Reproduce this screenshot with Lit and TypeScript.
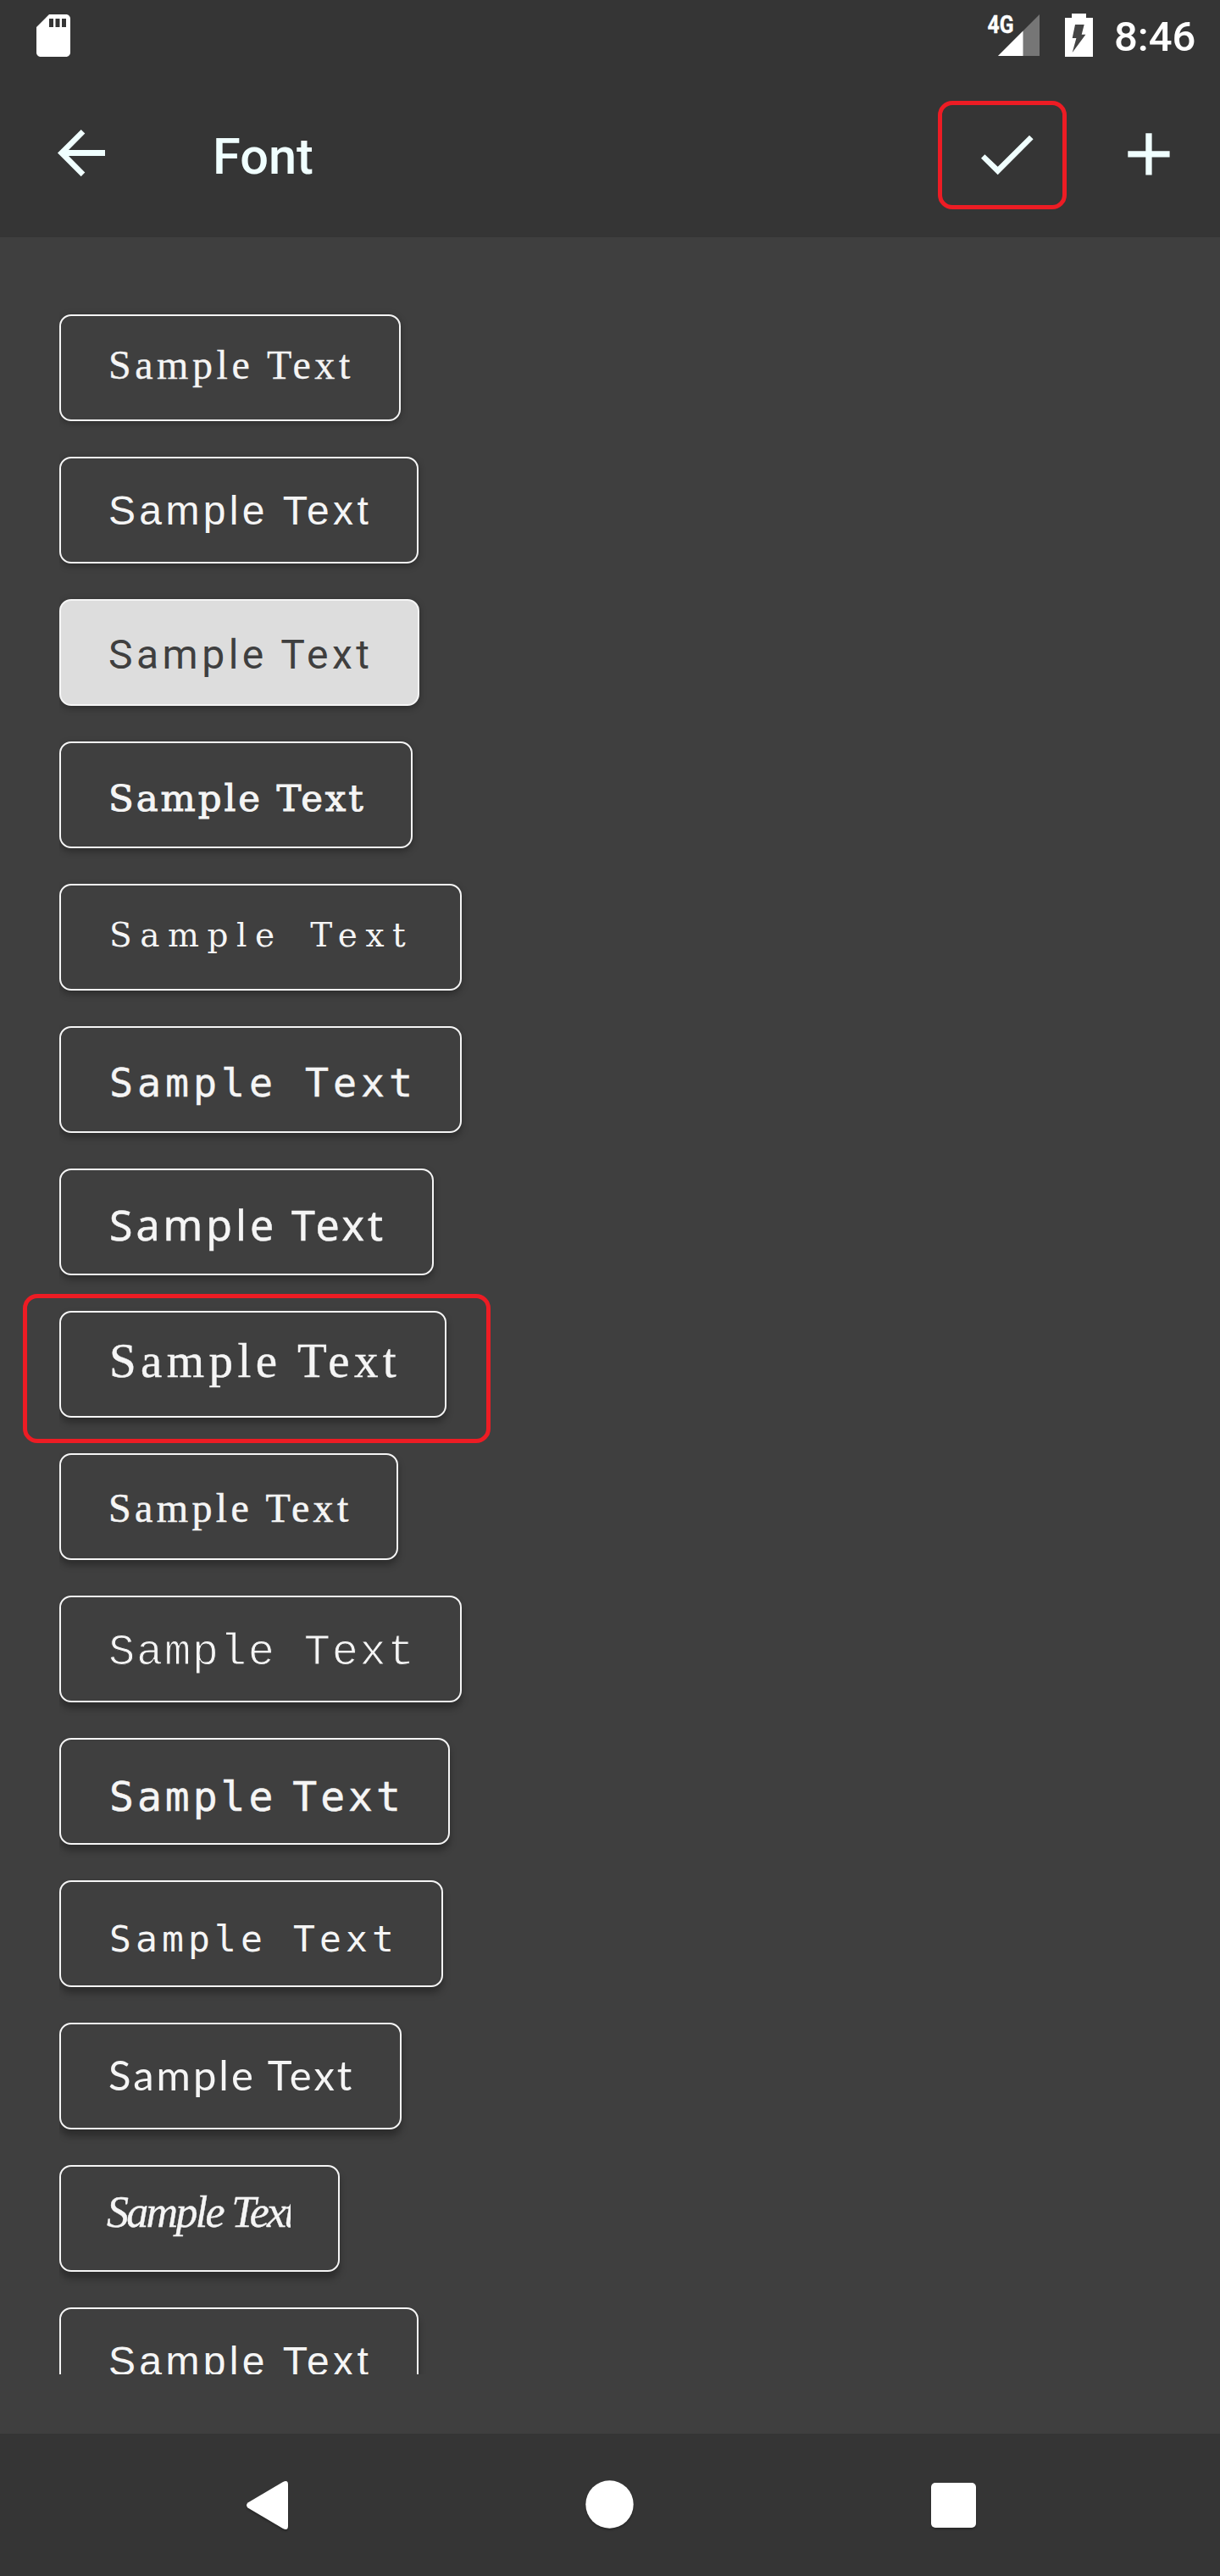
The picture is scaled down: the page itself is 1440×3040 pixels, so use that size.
import { LitElement, html, css } from "lit";
import { customElement, property } from "lit/decorators.js";
import { styleMap } from "lit/directives/style-map.js";

interface Sample {
  face: string;
  width: number;
  baseline: number;
  selected?: boolean;
}

const SAMPLES: Sample[] = [
  { face: "book", width: 403, baseline: 76 },
  { face: "arial", width: 424, baseline: 80 },
  { face: "roboto", width: 425, baseline: 82, selected: true },
  { face: "slab", width: 417, baseline: 82 },
  { face: "typewriter", width: 475, baseline: 74 },
  { face: "mono", width: 475, baseline: 83 },
  { face: "humanist", width: 442, baseline: 85 },
  { face: "display", width: 457, baseline: 78 },
  { face: "times", width: 400, baseline: 81 },
  { face: "light-mono", width: 475, baseline: 81 },
  { face: "duo", width: 461, baseline: 86 },
  { face: "code", width: 453, baseline: 84 },
  { face: "lato", width: 404, baseline: 80 },
  { face: "script", width: 331, baseline: 73 },
  { face: "helvetica", width: 424, baseline: 80 },
];

@customElement("font-button")
export class FontButton extends LitElement {
  @property({ attribute: false }) sample!: Sample;
  @property({ type: Number }) depth = 0;

  static styles = css`
    :host { display: block; }
    .btn {
      display: flex;
      align-items: baseline;
      box-sizing: border-box;
      height: 126px;
      margin: 0;
      padding: 0 56px;
      border: 2px solid #f5f5f5;
      border-radius: 14px;
      background: #3f3f3f;
      color: #f5f5f5;
      white-space: pre;
    }
    /* Empty strut whose bottom edge fixes the label's baseline for any font. */
    .btn::before { content: ""; width: 0; height: var(--baseline); }
    .selected { background: #ddd; color: #3f3f3f; }
    .label { line-height: 1; flex: none; }
    .book { font: 48px/1 "Liberation Serif", serif; letter-spacing: 4.55px; -webkit-text-stroke: 0.3px #f5f5f5; }
    .arial { font: 48px/1 "Liberation Sans", sans-serif; letter-spacing: 4.35px; }
    .roboto { font: 48px/1 Roboto, sans-serif; letter-spacing: 4.5px; }
    .slab { font: 43.5px/1 "DejaVu Serif", serif; letter-spacing: 2.9px; -webkit-text-stroke: 1px #f5f5f5; }
    .typewriter { font: 39px/1 "DejaVu Serif", serif; letter-spacing: 9.5px; word-spacing: 11px; margin-left: 1px; }
    .mono { font: 46.6px/1 "DejaVu Sans Mono", monospace; letter-spacing: 4.95px; margin-left: 1px; -webkit-text-stroke: 0.4px #f5f5f5; }
    .humanist { font: 50px/1 "Noto Sans", sans-serif; letter-spacing: 4px; margin-left: 1px; -webkit-text-stroke: 0.5px #f5f5f5; }
    .display { font: 57px/1 "Liberation Serif", serif; letter-spacing: 5.4px; margin-left: 1px; -webkit-text-stroke: 0.4px #f5f5f5; }
    .times { font: 48px/1 "Liberation Serif", serif; letter-spacing: 4.35px; -webkit-text-stroke: 0.5px #f5f5f5; }
    .light-mono { font: 52px/1 "Liberation Mono", monospace; letter-spacing: 1.75px; -webkit-text-stroke: 1px #3f3f3f; }
    .duo { font: 48px/1 "DejaVu Sans Mono", monospace; letter-spacing: 4px; word-spacing: -14px; margin-left: 1px; -webkit-text-stroke: 0.5px #f5f5f5; }
    .code { font: 43px/1 "DejaVu Sans Mono", monospace; letter-spacing: 5.1px; margin-left: 1px; }
    .lato { font: 49px/1 Lato, sans-serif; letter-spacing: 3px; }
    .script { font: italic 52px/1 "Liberation Serif", serif; letter-spacing: -2.7px; -webkit-text-stroke: 0.4px #f5f5f5; }
    .helvetica { font: 48px/1 "Liberation Sans", sans-serif; letter-spacing: 4.35px; }
    .clip { width: 217px; margin-left: -2px; clip-path: inset(-20px 0 -20px -10px); }
  `;

  render() {
    const s = this.sample;
    const drop = 2 + this.depth * 0.45;
    return html`<div
      class="btn ${s.selected ? "selected" : ""}"
      style=${styleMap({
        width: `${s.width}px`,
        "--baseline": `${s.baseline - 2}px`,
        "box-shadow": `0 ${drop}px 8px rgba(0,0,0,0.3)`,
      })}
    ><span class="label ${s.face} ${s.face === "script" ? "clip" : ""}">Sample Text</span></div>`;
  }
}

@customElement("app-root")
export class AppRoot extends LitElement {
  static styles = css`
    :host {
      display: block;
      font-family: Roboto, sans-serif;
    }
    .screen {
      display: flex;
      flex-direction: column;
      width: 1440px;
      height: 3040px;
      background: #3f3f3f;
      overflow: hidden;
    }
    svg { display: block; flex: none; }
    .status {
      display: flex;
      justify-content: space-between;
      height: 84px;
      background: #353535;
      padding: 0 29px 0 33px;
      color: #fff;
    }
    .status-left { padding-top: 12px; }
    .status-right { display: flex; }
    .g4 { font: 700 29px Roboto, sans-serif; fill: #fff; stroke: #fff; stroke-width: 0.4px; }
    .time { font-size: 49px; font-weight: 500; line-height: 88px; width: 96px; white-space: nowrap; }
    .toolbar {
      display: flex;
      align-items: center;
      height: 196px;
      background: #353535;
      box-sizing: border-box;
      color: #f0ffff;
      fill: #f0ffff;
    }
    .back { margin-left: 56px; }
    .title { margin: 5px 0 0 105px; font-size: 59.5px; font-weight: 500; line-height: 70px; flex: 1; }
    .accept {
      display: flex;
      box-sizing: border-box;
      width: 152px;
      height: 128px;
      margin: 2px 56px 0 0;
      border: 5px solid #ed1c24;
      border-radius: 17px;
    }
    .add { margin-right: 44px; }
    .content {
      position: relative;
      flex: 1;
      padding: 0 70px 70px;
      overflow: hidden;
    }
    .list {
      display: flex;
      flex-direction: column;
      gap: 42px;
      box-sizing: border-box;
      height: 2522px;
      padding-top: 91px;
      overflow: hidden;
    }
    .callout {
      position: absolute;
      box-sizing: border-box;
      left: 27px;
      top: 1247px;
      width: 552px;
      height: 176px;
      border: 5px solid #ed1c24;
      border-radius: 17px;
    }
    .nav {
      display: flex;
      align-items: center;
      justify-content: space-between;
      height: 168px;
      padding: 0 275px;
      background: #353535;
      fill: #fff;
    }
    .nav svg { filter: drop-shadow(0 2px 1px rgba(0, 0, 0, 0.25)); }
  `;

  render() {
    return html`
      <div class="screen">
        <div class="status">
          <div class="status-left">
            <svg width="60" height="60" viewBox="0 0 24 24" fill="#fff">
              <path d="M18 2h-8L4 8v12c0 1.1.9 2 2 2h12c1.1 0 2-.9 2-2V4c0-1.1-.9-2-2-2zm-6 6h-2V4h2v4zm3 0h-2V4h2v4zm3 0h-2V4h2v4z" />
            </svg>
          </div>
          <div class="status-right">
            <svg width="155" height="84" viewBox="1160 0 155 84">
              <text class="g4" x="1165.5" y="38.9" textLength="31" lengthAdjust="spacingAndGlyphs">4G</text>
              <path d="M1178 66L1227 17V66z" fill="#767676" />
              <path d="M1178 66L1207.5 36.5V66z" fill="#fff" />
              <path d="M1265 16h17v5h8v46h-33V21h8z" fill="#fff" />
              <path d="M1269 29h10.7l-3 11.7h4.7L1265.7 62l4.7-17h-4.7z" fill="#444" />
            </svg>
            <div class="time">8:46</div>
          </div>
        </div>
        <div class="toolbar">
          <svg class="back" width="90" height="90" viewBox="56 137 90 90">
            <path d="M68 180.5L95.7 153l4.6 4.5L81 177h43v7H81l19.3 19.5-4.6 4.7z" />
          </svg>
          <div class="title">Font</div>
          <div class="accept">
            <svg width="142" height="118" viewBox="1112 124 142 118">
              <path d="M1158 186.7l4.4-4.4 15.3 14.4L1215 159.7l4.6 4.6-41.9 42z" />
            </svg>
          </div>
          <svg class="add" width="81" height="90" viewBox="1315 137 81 90">
            <path d="M1352.300 157.300h7.300v21h21v7.300h-21v21h-7.300v-21h-21v-7.300h21z" />
          </svg>
        </div>
        <div class="content">
          <div class="list">
            ${SAMPLES.map((s, i) => html`<font-button .sample=${s} .depth=${i}></font-button>`)}
          </div>
          <div class="callout"></div>
        </div>
        <div class="nav">
          <svg width="80" height="80" viewBox="275 2916 80 80">
            <path d="M292.5 2953.5L334 2929q6-3 6 3v49q0 6-6 3l-41.500-24.500q-3-3 0-6z" />
          </svg>
          <svg width="80" height="80" viewBox="680 2916 80 80"><circle cx="719.5" cy="2955.5" r="28.2" /></svg>
          <svg width="80" height="80" viewBox="1085 2916 80 80"><rect x="1099" y="2930" width="53" height="53" rx="5" /></svg>
        </div>
      </div>
    `;
  }
}
